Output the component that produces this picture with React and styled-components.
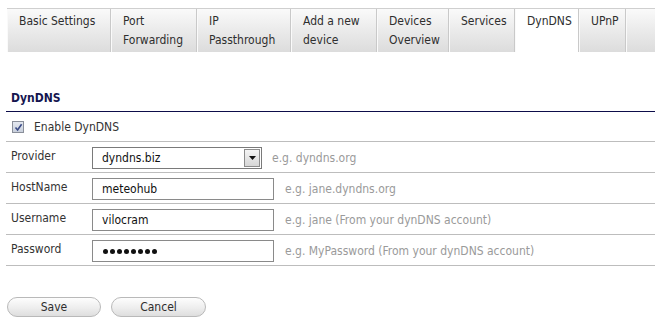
import React from "react";
import styled, { createGlobalStyle } from "styled-components";

const Global = createGlobalStyle`
  html, body { margin: 0; padding: 0; background: #fff; }
  body {
    font-family: "DejaVu Sans Condensed", "DejaVu Sans", Verdana, sans-serif;
    font-size: 12px;
    color: #333;
    width: 655px;
    height: 324px;
    overflow: hidden;
  }
`;

const Page = styled.div`
  padding-top: 8px;
`;

const TabBar = styled.div`
  display: flex;
  margin-left: 7px;
  border-top: 1px solid #cfcfcf;
  height: 43px;
`;

const Tab = styled.div`
  box-sizing: border-box;
  width: ${(p) => p.$w}px;
  flex: none;
  padding: 3px 0 0 12px;
  line-height: 19px;
  color: #2e2e2e;
  border-right: 1px solid #c9c9c9;
  box-shadow: inset 1px 0 0 #fafafa;
  background: ${(p) =>
    p.$active ? "#fff" : "linear-gradient(#fafafa 0%, #ececec 45%, #dcdcdc 100%)"};
  &:last-child { border-right: none; }
`;

const Section = styled.div`
  margin: 38px 0 0 6px;
`;

const Heading = styled.div`
  padding: 0 0 4px 5px;
  line-height: 17px;
  color: #15154f;
  font-weight: bold;
  border-bottom: 1px solid #0d0d4a;
`;

const Row = styled.div`
  display: flex;
  align-items: center;
  height: 30px;
  border-bottom: 1px solid #bdbdbd;
  padding-left: 5px;
`;

const CheckRow = styled(Row)`
  height: 29px;
  padding-left: 6px;
  gap: 10px;
`;

const Check = styled.span`
  box-sizing: border-box;
  width: 12px;
  height: 12px;
  border: 1px solid #8a8f9a;
  background: linear-gradient(#e4e8f0, #c9d0dc);
  display: inline-flex;
  align-items: center;
  justify-content: center;
  margin-top: 1px;
`;

const Label = styled.span`
  width: 81px;
  flex: none;
  margin-top: -3px;
`;

const Field = styled.div`
  box-sizing: border-box;
  width: ${(p) => p.$w}px;
  height: 22px;
  border: 1px solid #8a8a8a;
  background: #fff;
  color: #111;
  display: flex;
  align-items: center;
  padding-left: 9px;
  margin-top: 2px;
  flex: none;
`;

const SelectField = styled(Field)`
  padding-right: 1px;
  justify-content: space-between;
  border-color: #7a7a7a;
`;

const Arrow = styled.span`
  box-sizing: border-box;
  width: 16px;
  height: 18px;
  border: 1px solid #8c8c8c;
  background: linear-gradient(#f4f4f4, #d6d6d6);
  display: flex;
  align-items: center;
  justify-content: center;
`;

const Dots = styled.span`
  display: flex;
  gap: 2px;
  padding-left: 1px;
`;

const Dot = styled.span`
  width: 5px;
  height: 5px;
  border-radius: 50%;
  background: #111;
`;

const Hint = styled.span`
  color: #9a9a9a;
  margin-left: ${(p) => p.$ml || 11}px;
  margin-top: 1px;
  white-space: nowrap;
`;

const Buttons = styled.div`
  display: flex;
  gap: 10px;
  margin: 31px 0 0 7px;
`;

const Button = styled.div`
  box-sizing: border-box;
  width: ${(p) => p.$w}px;
  height: 20px;
  border: 1px solid #b9b9b9;
  border-radius: 10px;
  background: linear-gradient(#fdfdfd 0%, #efefef 50%, #dedede 100%);
  display: flex;
  align-items: center;
  justify-content: center;
  color: #2e2e2e;
`;

const tabs = [
  { w: 104, t: ["Basic Settings"] },
  { w: 86, t: ["Port", "Forwarding"] },
  { w: 94, t: ["IP", "Passthrough"] },
  { w: 86, t: ["Add a new", "device"] },
  { w: 72, t: ["Devices", "Overview"] },
  { w: 66, t: ["Services"] },
  { w: 64, t: ["DynDNS"], active: true },
  { w: 47, t: ["UPnP"] },
  { w: 29, t: [] },
];

export default function App() {
  return (
    <Page>
      <Global />
      <TabBar>
        {tabs.map((tab, i) => (
          <Tab key={i} $w={tab.w} $active={tab.active}>
            {tab.t.map((l, j) => (
              <div key={j}>{l}</div>
            ))}
          </Tab>
        ))}
      </TabBar>
      <Section>
        <Heading>DynDNS</Heading>
        <CheckRow>
          <Check>
            <svg width="9" height="9" viewBox="0 0 9 9">
              <path d="M1.5 4.5 L3.6 7 L7.6 1.2" fill="none" stroke="#3a4a86" strokeWidth="1.6" />
            </svg>
          </Check>
          <span>Enable DynDNS</span>
        </CheckRow>
        <Row>
          <Label>Provider</Label>
          <SelectField $w={170}>
            <span>dyndns.biz</span>
            <Arrow>
              <svg width="7" height="4" viewBox="0 0 7 4">
                <path d="M0 0 H7 L3.5 4 Z" fill="#111" />
              </svg>
            </Arrow>
          </SelectField>
          <Hint $ml={10}>e.g. dyndns.org</Hint>
        </Row>
        <Row>
          <Label>HostName</Label>
          <Field $w={182}>meteohub</Field>
          <Hint>e.g. jane.dyndns.org</Hint>
        </Row>
        <Row>
          <Label>Username</Label>
          <Field $w={182}>vilocram</Field>
          <Hint>e.g. jane (From your dynDNS account)</Hint>
        </Row>
        <Row>
          <Label>Password</Label>
          <Field $w={182}>
            <Dots>
              {Array.from({ length: 8 }).map((_, i) => (
                <Dot key={i} />
              ))}
            </Dots>
          </Field>
          <Hint>e.g. MyPassword (From your dynDNS account)</Hint>
        </Row>
      </Section>
      <Buttons>
        <Button $w={94}>Save</Button>
        <Button $w={95}>Cancel</Button>
      </Buttons>
    </Page>
  );
}
